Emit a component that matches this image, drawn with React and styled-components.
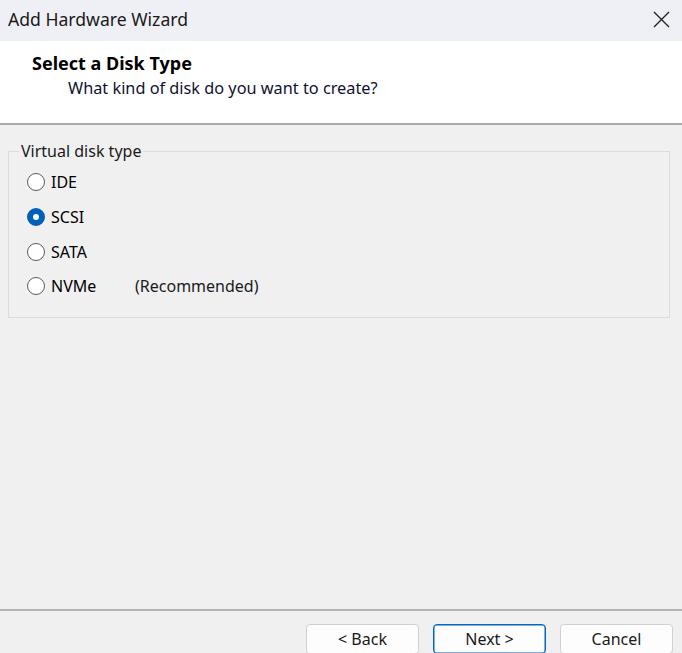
import React, { useState } from 'react';
import styled, { createGlobalStyle } from 'styled-components';

const GlobalStyle = createGlobalStyle`
  html, body {
    margin: 0;
    padding: 0;
    height: 100%;
  }
  body {
    font-family: 'Noto Sans', 'Open Sans', sans-serif;
    color: #000000;
  }
`;

const Window = styled.div`
  width: 100vw;
  height: 100vh;
  display: flex;
  flex-direction: column;
  overflow: hidden;
  background-color: #f0f0f0;
  font-size: 16px;
`;

const TitleBar = styled.div`
  height: 41px;
  flex-shrink: 0;
  display: flex;
  align-items: center;
  justify-content: space-between;
  padding: 0 12px 3px 8px;
  box-sizing: border-box;
  background-color: #eff0f5;
  color: #1a1a1a;
  font-size: 17.6px;
`;

const CloseButton = styled.button`
  border: none;
  background: transparent;
  padding: 0;
  width: 18px;
  height: 18px;
  display: flex;
  align-items: center;
  justify-content: center;
  cursor: pointer;
`;

const Header = styled.div`
  height: 84px;
  flex-shrink: 0;
  box-sizing: border-box;
  background-color: #ffffff;
  padding: 10px 0 0 32px;
  border-bottom: 2px solid #a9a9a9;
`;

const Heading = styled.div`
  font-weight: 700;
  font-size: 18px;
  line-height: 25px;
`;

const SubHeading = styled.div`
  font-size: 16.3px;
  line-height: 25px;
  padding-left: 36px;
  color: #0f1230;
`;

const Body = styled.div`
  flex: 1;
  padding: 16px 12px 0 8px;
`;

const Group = styled.fieldset`
  margin: 0;
  padding: 4px 0 13px 18px;
  border: 1px solid #dcdcdc;
  border-radius: 0;
`;

const Legend = styled.legend`
  margin-left: -8px;
  padding: 0 2px;
  line-height: 20px;
  color: #1a1a1a;
`;

const OptionRow = styled.label`
  height: 34.7px;
  display: flex;
  align-items: center;
  cursor: pointer;
`;

const RadioCircle = styled.span`
  width: 18px;
  height: 18px;
  box-sizing: border-box;
  border-radius: 50%;
  flex-shrink: 0;
  margin-right: 6px;
  border: ${(p) => (p.$checked ? '6px solid #005fb8' : '1.5px solid #5c5c5c')};
  background-color: #ffffff;
`;

const OptionText = styled.span`
  min-width: 84px;
`;

const Note = styled.span`
  color: #1a1a1a;
`;

const Footer = styled.div`
  height: 44px;
  flex-shrink: 0;
  box-sizing: border-box;
  border-top: 2px solid #b4b4b4;
  padding: 13px 9px 0 0;
  display: flex;
  justify-content: flex-end;
  align-items: flex-start;
  gap: 14px;
`;

const Button = styled.button`
  width: 113px;
  height: 30px;
  flex-shrink: 0;
  box-sizing: border-box;
  border-radius: 4px;
  border: 1px solid ${(p) => (p.$primary ? '#0067c0' : '#d0d0d0')};
  box-shadow: ${(p) => (p.$primary ? 'inset 0 0 0 0.5px #0067c0' : 'none')};
  background-color: #fdfdfd;
  font-family: 'Noto Sans', 'Open Sans', sans-serif;
  font-size: 16px;
  color: #1a1a1a;
  padding: 0;
  cursor: pointer;
`;

const options = [
  { id: 'ide', label: 'IDE' },
  { id: 'scsi', label: 'SCSI' },
  { id: 'sata', label: 'SATA' },
  { id: 'nvme', label: 'NVMe', note: '(Recommended)' },
];

const App = () => {
  const [diskType, setDiskType] = useState('scsi');

  return (
    <Window>
      <GlobalStyle />
      <TitleBar>
        <span>Add Hardware Wizard</span>
        <CloseButton aria-label="Close">
          <svg width="17" height="17" viewBox="0 0 17 17">
            <path d="M1 1 L16 16 M16 1 L1 16" stroke="#222" strokeWidth="1.4" fill="none" />
          </svg>
        </CloseButton>
      </TitleBar>
      <Header>
        <Heading>Select a Disk Type</Heading>
        <SubHeading>What kind of disk do you want to create?</SubHeading>
      </Header>
      <Body>
        <Group>
          <Legend>Virtual disk type</Legend>
          {options.map((opt) => (
            <OptionRow key={opt.id} onClick={() => setDiskType(opt.id)}>
              <RadioCircle $checked={diskType === opt.id} />
              <OptionText>{opt.label}</OptionText>
              {opt.note && <Note>{opt.note}</Note>}
            </OptionRow>
          ))}
        </Group>
      </Body>
      <Footer>
        <Button>&lt; Back</Button>
        <Button $primary>Next &gt;</Button>
        <Button>Cancel</Button>
      </Footer>
    </Window>
  );
};

export default App;
